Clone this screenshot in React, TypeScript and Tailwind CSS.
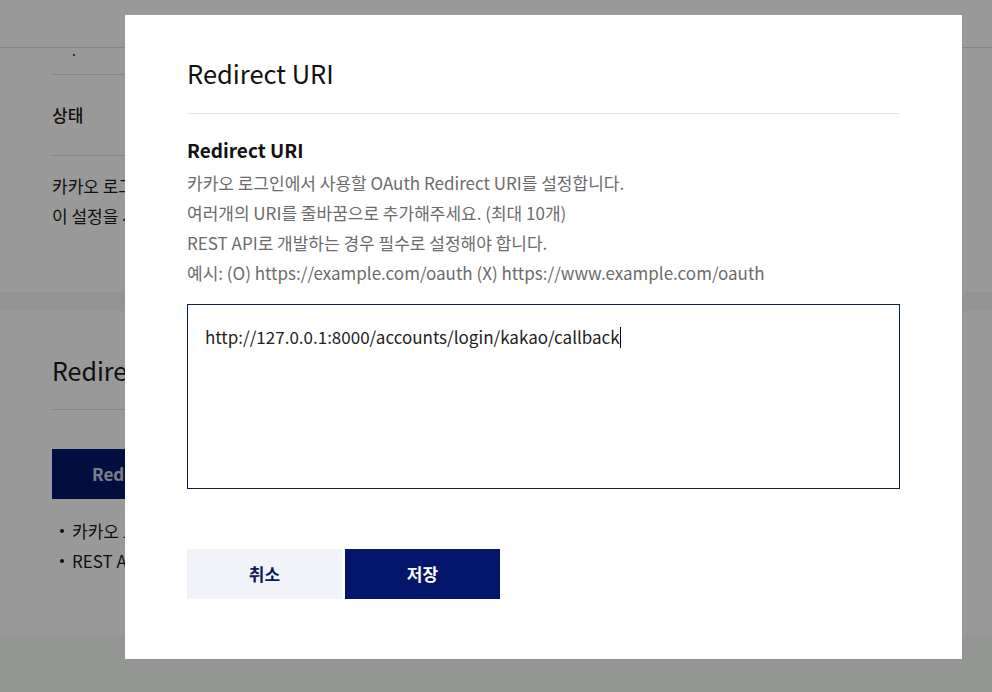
import React from 'react';

const font = { fontFamily: '"Noto Sans CJK KR", "Noto Sans", sans-serif' };

const App: React.FC = () => {
  const guide = [
    '카카오 로그인에서 사용할 OAuth Redirect URI를 설정합니다.',
    '여러개의 URI를 줄바꿈으로 추가해주세요. (최대 10개)',
    'REST API로 개발하는 경우 필수로 설정해야 합니다.',
    '예시: (O) https://example.com/oauth (X) https://www.example.com/oauth',
  ];

  return (
    <div className="relative w-full h-[692px] overflow-hidden bg-white text-[#1a1a1a]" style={font}>
      {/* page behind the dialog */}
      <div className="flex flex-col h-full">
        <div className="h-[48px] shrink-0 border-b border-[#dedede]" />
        <div className="px-[52px]">
          <div className="h-[27px] border-b border-[#dedede] pl-[20px] leading-[4px] text-[14px]">.</div>
          <div className="h-[81px] flex items-center border-b border-[#dedede] text-[17px] font-medium">상태</div>
          <div className="pt-[15px] text-[17px] leading-[30px]">
            <p>카카오 로그인 상태를 설정합니다.</p>
            <p>이 설정을 사용하면 카카오 로그인을 이용할 수 있습니다.</p>
          </div>
        </div>
        <div className="mt-[61px] h-[19px] shrink-0 bg-[#f5f7f5]" />
        <div className="h-[325px] shrink-0 px-[52px]">
          <div className="h-[99px] flex items-end pb-[20px] border-b border-[#dedede] text-[25px]">Redirect URI</div>
          <div className="mt-[39px] w-[300px] h-[50px] bg-[#04166b] text-white/80 font-bold text-[17px] flex items-center pl-[40px]">Redirect URI 등록</div>
          <ul className="mt-[17px] pl-[8px] text-[17px] leading-[30px]">
            <li className="flex items-center gap-[8px]"><span className="w-[4px] h-[4px] rounded-full bg-[#1a1a1a]" />카카오 로그인에서 사용할 Redirect URI를 등록합니다.</li>
            <li className="flex items-center gap-[8px]"><span className="w-[4px] h-[4px] rounded-full bg-[#1a1a1a]" />REST API로 개발하는 경우 필수로 설정해야 합니다.</li>
          </ul>
        </div>
        <div className="flex-1 bg-[#f7faf7]" />
      </div>

      {/* dim overlay */}
      <div className="absolute inset-0 bg-black/40" />

      {/* dialog */}
      <div className="absolute left-[125px] top-[15px] w-[837px] h-[644px] bg-white px-[62px] flex flex-col">
        <h1 className="pt-[41px] text-[25.5px] leading-[34px] text-[#111]">Redirect URI</h1>
        <div className="mt-[23px] border-t border-[#e5e5e5]" />
        <h2 className="mt-[23px] text-[19px] leading-[26px] font-bold text-[#111]">Redirect URI</h2>
        <div className="mt-[5px] text-[17px] leading-[30px] text-[#6b6b6b]">
          {guide.map((line, i) => (
            <p key={i}>{line}</p>
          ))}
        </div>
        <div className="mt-[16px] h-[185px] border border-[#0b1a6b] pl-[17px] pt-[20px] text-[17px] leading-[24px] text-[#222]">
          http://127.0.0.1:8000/accounts/login/kakao/callback
          <span className="inline-block w-px h-[21px] bg-black align-[-4px]" />
        </div>
        <div className="mt-[60px] flex gap-[3px]">
          <button className="w-[155px] h-[50px] bg-[#f2f3f8] text-[#0c1a5a] text-[17px] font-bold">취소</button>
          <button className="w-[155px] h-[50px] bg-[#04166b] text-white text-[17px] font-bold">저장</button>
        </div>
      </div>
    </div>
  );
};

export default App;
